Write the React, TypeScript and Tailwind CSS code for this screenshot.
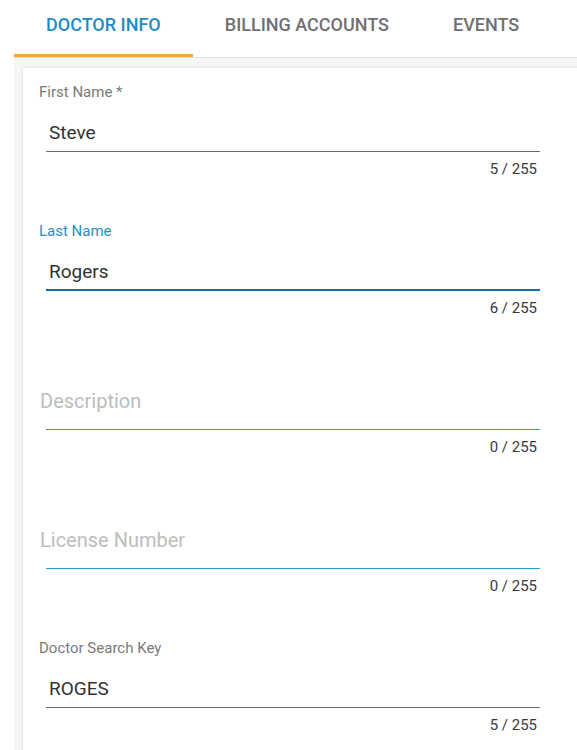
import React from 'react';

type Field = {
  label: string;
  value: string;
  focused?: boolean;
  hover?: boolean;
};

const fields: Field[] = [
  { label: 'First Name *', value: 'Steve' },
  { label: 'Last Name', value: 'Rogers', focused: true },
  { label: 'Description', value: '', hover: true },
  { label: 'License Number', value: '', hover: true },
  { label: 'Doctor Search Key', value: 'ROGES' },
];

function TextField({ label, value, focused, hover }: Field) {
  const empty = value.length === 0;
  let line = 'h-px bg-[#6b6b6b] mt-px';
  if (focused) line = 'h-[2px] bg-[#1470ac]';
  else if (hover) line = 'h-px bg-[#2a9ad2] mt-px';

  return (
    <div className="h-[139px] w-[494px] ml-[23px]">
      <div
        className={`h-[24px] leading-[28px] text-[15px] -ml-[7px] ${
          focused ? 'text-[#2a8fc2]' : 'text-[#7a7a7a]'
        }`}
      >
        {empty ? '' : label}
      </div>
      <div className="h-[32px] mt-[14px] text-[19px] text-[#333]">
        {empty ? (
          <div className="-ml-[6px] leading-[14px] text-[20px] text-[#bdbdbd]">{label}</div>
        ) : (
          <div className="pl-[3px] leading-[34px]">{value}</div>
        )}
      </div>
      <div className="h-[2px] mt-[2px] flex flex-col justify-end">
        <div className={line} />
      </div>
      <div className="mt-[8px] h-[18px] leading-[18px] text-right pr-[3px] text-[15px] text-[#3a3a3a]">
        {value.length} / 255
      </div>
    </div>
  );
}

export default function App() {
  const tabs = ['DOCTOR INFO', 'BILLING ACCOUNTS', 'EVENTS'];
  return (
    <div className="w-[577px] h-[750px] overflow-hidden bg-white" style={{ fontFamily: 'Roboto, Arial, sans-serif' }}>
      <div className="ml-[14px] flex border-b border-[#e2e2e2]">
        {tabs.map((t, i) => (
          <div
            key={t}
            className={`h-[57px] px-[32px] pb-[5px] flex items-center text-[18px] font-medium ${
              i === 0 ? 'text-[#1f8bbf] border-b-[3px] border-[#f7a23b]' : 'text-[#707070] border-b-[3px] border-transparent'
            }`}
          >
            {t}
          </div>
        ))}
      </div>
      <div className="ml-[14px] bg-[#f6f6f6] pt-[10px] pl-[9px] h-[700px]">
        <div className="bg-white w-[600px] h-[700px] pt-[10px] shadow-[0_0_3px_rgba(0,0,0,0.14)]">
          {fields.map((f) => (
            <TextField key={f.label} {...f} />
          ))}
        </div>
      </div>
    </div>
  );
}
